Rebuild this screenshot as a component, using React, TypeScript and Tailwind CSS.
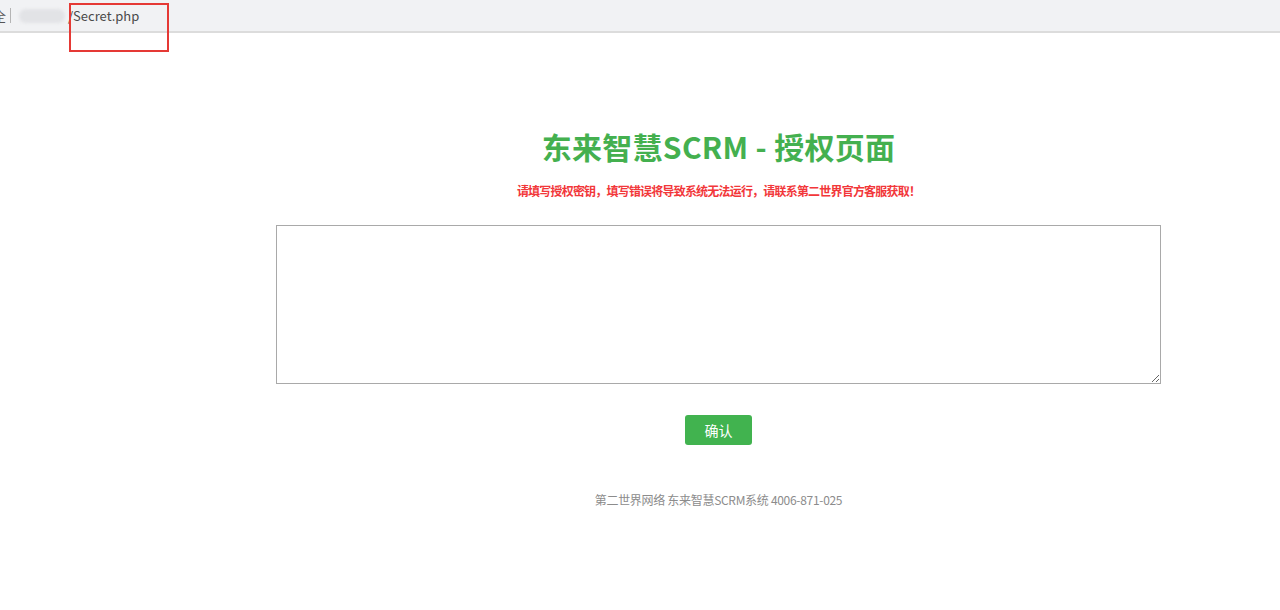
export default function App() {
  return (
    <div className="relative min-h-[610px] w-full bg-white font-['Microsoft_YaHei','Noto_Sans_CJK_SC',sans-serif]">
      {/* browser address bar */}
      <div className="flex h-[33px] items-center overflow-hidden border-b-2 border-[#dcdcdc] bg-[#f1f2f4] text-[13px] text-[#555]">
        <span className="-ml-[7px] w-[14px] overflow-hidden">全</span>
        <span className="ml-[3px] h-[15px] w-px bg-[#b5b5b5]" />
        <span className="ml-[8px] h-[14px] w-[46px] rounded-full bg-[#e2e3e6] blur-[1.5px]" />
        <span className="ml-[3px] text-[#4a4a4a]">/Secret.php</span>
      </div>
      <div className="absolute left-[69px] top-[3px] h-[49px] w-[100px] border-2 border-[#e53935]" />

      <div className="ml-[276px] flex w-[885px] flex-col items-center pt-[95px]">
        <h1 className="text-[30px] font-bold leading-[36px] tracking-[0.3px] text-[#44b04f]">东来智慧SCRM - 授权页面</h1>
        <p className="mt-[19px] text-[12px] font-bold leading-[16px] tracking-[-0.8px] text-[#f2373a]">
          请填写授权密钥，填写错误将导致系统无法运行，请联系第二世界官方客服获取！
        </p>
        <textarea className="mt-[26px] block h-[159px] w-[885px] resize-y border border-[#a9a9a9] outline-none" />
        <button className="mt-[31px] h-[30px] w-[67px] rounded-[3px] bg-[#41b34f] text-[14px] text-white">确认</button>
        <p className="mt-[46px] text-[12px] tracking-[-0.3px] text-[#8c8c8c]">第二世界网络 东来智慧SCRM系统 4006-871-025</p>
      </div>
    </div>
  );
}
